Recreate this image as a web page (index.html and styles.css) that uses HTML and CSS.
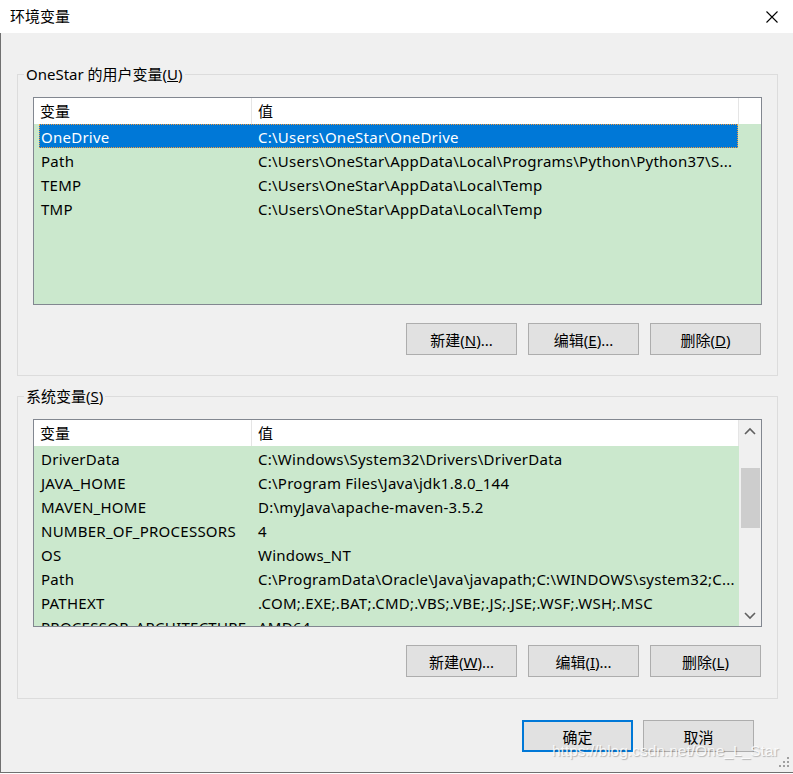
FILE: index.html
```html
<!DOCTYPE html>
<html>
  <head>
    <meta charset="UTF-8">
    <title>环境变量</title>
    <link rel="stylesheet" href="styles.css">
  </head>
  <body>
    <div class="window">
      <!-- Title bar -->
      <div class="titlebar">
        <span class="title">环境变量</span>
        <svg class="close" width="12" height="12" viewBox="0 0 12 12">
          <path d="M0.5 0.5 L11.5 11.5 M11.5 0.5 L0.5 11.5" stroke="#000" stroke-width="1.1" fill="none"/>
        </svg>
      </div>

      <div class="content">
        <!-- User variables -->
        <fieldset class="group">
          <legend>OneStar 的用户变量(<u>U</u>)</legend>
          <div class="list">
            <div class="list-main">
              <div class="list-head">
                <div class="hcell c1">变量</div>
                <div class="hcell c2">值</div>
                <div class="hcell stub"></div>
              </div>
              <div class="row selected"><div class="cell c1">OneDrive</div><div class="cell c2">C:\Users\OneStar\OneDrive</div></div>
              <div class="row"><div class="cell c1">Path</div><div class="cell c2">C:\Users\OneStar\AppData\Local\Programs\Python\Python37\S...</div></div>
              <div class="row"><div class="cell c1">TEMP</div><div class="cell c2">C:\Users\OneStar\AppData\Local\Temp</div></div>
              <div class="row"><div class="cell c1">TMP</div><div class="cell c2">C:\Users\OneStar\AppData\Local\Temp</div></div>
            </div>
          </div>
          <div class="buttons">
            <button class="btn">新建(<u>N</u>)...</button>
            <button class="btn">编辑(<u>E</u>)...</button>
            <button class="btn">删除(<u>D</u>)</button>
          </div>
        </fieldset>

        <!-- System variables -->
        <fieldset class="group system">
          <legend>系统变量(<u>S</u>)</legend>
          <div class="list">
            <div class="list-main">
              <div class="list-head">
                <div class="hcell c1">变量</div>
                <div class="hcell c2">值</div>
              </div>
              <div class="row"><div class="cell c1">DriverData</div><div class="cell c2">C:\Windows\System32\Drivers\DriverData</div></div>
              <div class="row"><div class="cell c1">JAVA_HOME</div><div class="cell c2">C:\Program Files\Java\jdk1.8.0_144</div></div>
              <div class="row"><div class="cell c1">MAVEN_HOME</div><div class="cell c2">D:\myJava\apache-maven-3.5.2</div></div>
              <div class="row"><div class="cell c1">NUMBER_OF_PROCESSORS</div><div class="cell c2">4</div></div>
              <div class="row"><div class="cell c1">OS</div><div class="cell c2">Windows_NT</div></div>
              <div class="row"><div class="cell c1">Path</div><div class="cell c2">C:\ProgramData\Oracle\Java\javapath;C:\WINDOWS\system32;C...</div></div>
              <div class="row"><div class="cell c1">PATHEXT</div><div class="cell c2">.COM;.EXE;.BAT;.CMD;.VBS;.VBE;.JS;.JSE;.WSF;.WSH;.MSC</div></div>
              <div class="row"><div class="cell c1">PROCESSOR_ARCHITECTURE</div><div class="cell c2">AMD64</div></div>
            </div>
            <div class="scrollbar">
              <div class="arrow">
                <svg width="12" height="8" viewBox="0 0 12 8"><path d="M1 7 L6 2 L11 7" stroke="#606060" stroke-width="1.6" fill="none"/></svg>
              </div>
              <div class="track"><div class="thumb"></div></div>
              <div class="arrow">
                <svg width="12" height="8" viewBox="0 0 12 8"><path d="M1 1 L6 6 L11 1" stroke="#606060" stroke-width="1.6" fill="none"/></svg>
              </div>
            </div>
          </div>
          <div class="buttons">
            <button class="btn">新建(<u>W</u>)...</button>
            <button class="btn">编辑(<u>I</u>)...</button>
            <button class="btn">删除(<u>L</u>)</button>
          </div>
        </fieldset>

        <div class="footer">
          <button class="btn default">确定</button>
          <button class="btn">取消</button>
        </div>
      </div>

      <!-- watermark + size grip sit over the dialog -->
      <div class="watermark">https://blog.csdn.net/One_L_Star</div>
      <svg class="grip" width="12" height="12" viewBox="0 0 12 12">
        <rect x="9" y="1" width="2" height="2" fill="#a0a0a0"/>
        <rect x="5" y="5" width="2" height="2" fill="#a0a0a0"/>
        <rect x="9" y="5" width="2" height="2" fill="#a0a0a0"/>
        <rect x="1" y="9" width="2" height="2" fill="#a0a0a0"/>
        <rect x="5" y="9" width="2" height="2" fill="#a0a0a0"/>
        <rect x="9" y="9" width="2" height="2" fill="#a0a0a0"/>
      </svg>
    </div>
  </body>
</html>
```

FILE: styles.css
```css
body {
  margin: 0;
  background: #ffffff;
  font-family: "Noto Sans", "Noto Sans CJK SC", sans-serif;
  font-size: 15px;
  color: #000;
}
.window {
  position: relative;
  width: 793px;
  height: 773px;
  box-sizing: border-box;
  border-bottom: 1px solid #707070;
  display: flex;
  flex-direction: column;
  background: #f0f0f0;
}
.titlebar {
  height: 33px;
  flex: none;
  background: #fff;
  display: flex;
  align-items: center;
  justify-content: space-between;
  padding: 0 15px 0 10px;
}
.title {
  line-height: 20px;
  margin-top: -2px;
}
.close {
  display: block;
}
.content {
  flex: 1;
  border-left: 1px solid #707070;
}
.group {
  margin: 31px 15px 0 16px;
  padding: 0 15px 20px 15px;
  border: 1px solid #dcdcdc;
  min-inline-size: 0;
}
.group.system {
  margin-top: 10px;
  padding-bottom: 21px;
}
.group legend {
  margin-left: -9px;
  padding: 0 2px;
  line-height: 20px;
}
.list {
  margin-top: 13px;
  height: 208px;
  box-sizing: border-box;
  border: 1px solid #828790;
  background: #cbe8cd;
  display: flex;
  overflow: hidden;
}
.list-main {
  flex: 1;
  min-width: 0;
  overflow: hidden;
}
.list-head {
  display: flex;
  height: 26px;
  background: #fff;
}
.hcell {
  line-height: 26px;
  border-right: 1px solid #e5e5e5;
  box-sizing: border-box;
  white-space: nowrap;
}
.hcell.c1 {
  width: 218px;
  padding-left: 6px;
}
.hcell.c2 {
  width: 487px;
  padding-left: 6px;
}
.hcell.stub {
  flex: 1;
  border-right: none;
}
.row {
  display: flex;
  height: 24px;
  margin-left: 5px;
  width: 699px;
  box-sizing: border-box;
}
.cell {
  line-height: 24px;
  padding-top: 1px;
  white-space: nowrap;
  overflow: hidden;
  letter-spacing: 0.25px;
}
.cell.c1 {
  width: 217px;
  padding-left: 2px;
  box-sizing: border-box;
}
.cell.c2 {
  flex: 1;
  padding-left: 2px;
}
.row.selected {
  background: #0078d7;
  color: #fff;
  outline: 1px dotted #f39a3b;
  outline-offset: -1px;
}
.scrollbar {
  width: 22px;
  flex: none;
  background: #f0f0f0;
  display: flex;
  flex-direction: column;
}
.arrow {
  height: 21px;
  display: flex;
  align-items: center;
  justify-content: center;
}
.track {
  flex: 1;
  padding-top: 27px;
}
.thumb {
  height: 60px;
  margin: 0 1px 0 2px;
  background: #cdcdcd;
}
.buttons {
  display: flex;
  justify-content: flex-end;
  gap: 11px;
  margin-top: 18px;
  padding-right: 1px;
}
.btn {
  width: 111px;
  height: 32px;
  background: #e1e1e1;
  border: 1px solid #adadad;
  font-family: inherit;
  font-size: 15px;
  color: #000;
  padding: 0;
}
.btn.default {
  border: 2px solid #0078d7;
}
.footer {
  display: flex;
  justify-content: flex-end;
  gap: 10px;
  margin-top: 21px;
  padding-right: 39px;
}
.watermark {
  position: absolute;
  left: 552px;
  top: 742px;
  font-family: "Liberation Sans", Arial, sans-serif;
  font-size: 15.5px;
  color: rgba(255, 255, 255, 0.85);
  text-shadow: 1px 1px 1px rgba(0, 0, 0, 0.25);
  white-space: nowrap;
}
.grip {
  position: absolute;
  right: 3px;
  bottom: 4px;
}
```
